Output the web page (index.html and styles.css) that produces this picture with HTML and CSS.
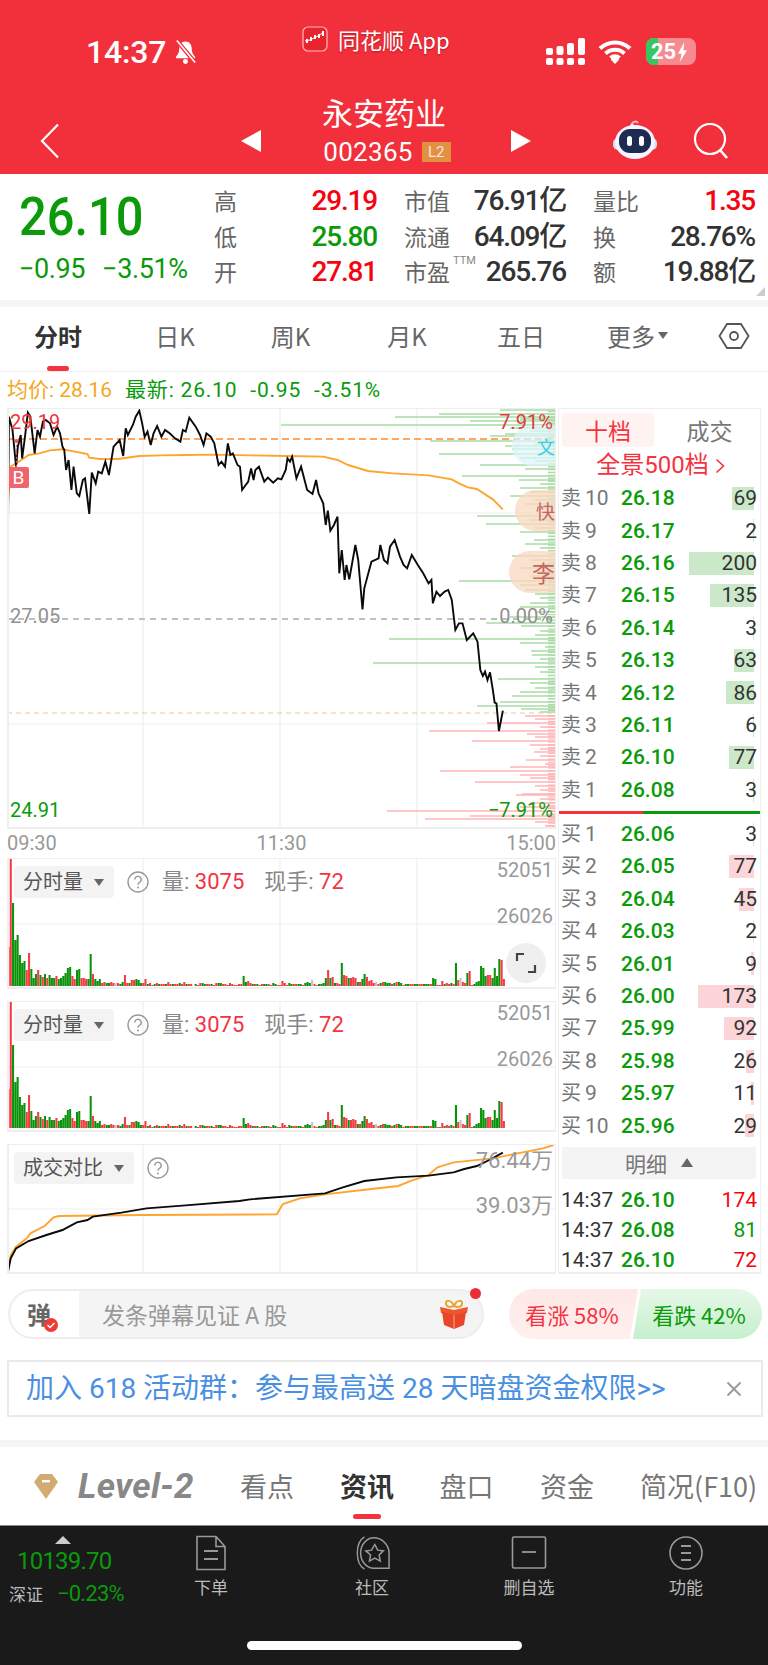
FILE: index.html
```html
<!DOCTYPE html>
<html lang="zh-CN">
<head>
<meta charset="utf-8">
<title>永安药业 002365</title>
<link rel="stylesheet" href="styles.css">
</head>
<body>
<div class="app">

  <header class="top">
    <div class="status">
      <div class="clock">14:37
        <svg class="bell" viewBox="0 0 24 26"><path d="M12 2c-4.500 0-6.500 3.500-6.500 7.500 0 4-1.500 6.500-3.500 8.500v1.500h20V18c-2-2-3.500-4.500-3.500-8.500C18.500 5.500 16.500 2 12 2z" fill="#fff"/><circle cx="12" cy="23" r="2.600" fill="#fff"/><path d="M3 1l19 23" stroke="#f2303c" stroke-width="4.500"/><path d="M3 1l19 23" stroke="#fff" stroke-width="1.800"/></svg>
      </div>
      <div class="brand">
        <svg class="brand-icon" viewBox="0 0 26 26"><rect x="1" y="1" width="24" height="24" rx="5" fill="#e8242e" stroke="#ffb9bd" stroke-width="1.200"/><path d="M3 15l5-1 4-2 4-2 6-4" stroke="#fff" stroke-width="1" fill="none"/><path d="M5 13v4M9 11v4M13 9v4M17 8v4M21 5v5" stroke="#fff" stroke-width="2"/></svg>
        <span>同花顺 App</span>
      </div>
      <div class="sys">
        <svg class="signal" viewBox="0 0 39 27"><g fill="#fff"><rect x="0" y="10" width="7" height="7" rx="2"/><rect x="0" y="20" width="7" height="7" rx="2"/><rect x="10.500" y="8" width="7" height="9" rx="2"/><rect x="10.500" y="20" width="7" height="7" rx="2"/><rect x="21" y="5" width="7" height="12" rx="2"/><rect x="21" y="20" width="7" height="7" rx="2"/><rect x="32" y="0" width="7" height="17" rx="2"/><rect x="32" y="20" width="7" height="7" rx="2"/></g></svg>
        <svg class="wifi" viewBox="0 0 34 26"><path d="M2 10.500a21.500 21.500 0 0 1 30 0M7.500 15.500a14 14 0 0 1 19 0M12.500 20a7 7 0 0 1 9 0" fill="none" stroke="#fff" stroke-width="4"/><path d="M17 26l-4.200-4.500a6 6 0 0 1 8.400 0z" fill="#fff"/></svg>
        <div class="battery"><span class="battery-fill"></span><span class="battery-num">25</span>
          <svg class="bolt" viewBox="0 0 12 22"><path d="M8 0L1 13h4l-2 9 8-13H7z" fill="#fff"/></svg>
        </div>
      </div>
    </div>
    <div class="nav">
      <svg class="back" viewBox="0 0 20 36"><path d="M18 1.500L2 18l16 16.500" fill="none" stroke="#fff" stroke-width="2.200"/></svg>
      <span class="tri tri-left"></span>
      <div class="stock">
        <div class="stock-name">永安药业</div>
        <div class="stock-code">002365<span class="l2">L2</span></div>
      </div>
      <span class="tri tri-right"></span>
      <span></span>
      <svg class="robot" viewBox="0 0 44 40"><path d="M19 6c-1-4 4-6 6-3" fill="none" stroke="#f7b6bd" stroke-width="2"/><circle cx="19" cy="6" r="2" fill="#fff"/><rect x="0" y="18" width="44" height="12" rx="5" fill="#d8dcf6"/><ellipse cx="22" cy="22" rx="20" ry="17" fill="#f4f5ff"/><rect x="6" y="9" width="32" height="24" rx="11" fill="#1d2a52"/><rect x="14" y="16" width="5" height="10" rx="2.500" fill="#fff"/><rect x="26" y="16" width="5" height="10" rx="2.500" fill="#fff"/></svg>
      <span></span>
      <svg class="search" viewBox="0 0 36 36"><circle cx="17" cy="16" r="15" fill="none" stroke="#fff" stroke-width="2.200"/><path d="M27 27l7 8" stroke="#fff" stroke-width="2.600"/></svg>
    </div>
  </header>

  <section class="quote">
    <div class="price">
      <div class="price-now">26.10</div>
      <div class="price-change"><span>−0.95</span><span>−3.51%</span></div>
    </div>
    <div class="stats">
      <div class="stat"><span class="k">高</span><span class="v up">29.19</span></div>
      <div class="stat"><span class="k">市值</span><span class="v">76.91亿</span></div>
      <div class="stat"><span class="k">量比</span><span class="v up">1.35</span></div>
      <div class="stat"><span class="k">低</span><span class="v down">25.80</span></div>
      <div class="stat"><span class="k">流通</span><span class="v">64.09亿</span></div>
      <div class="stat"><span class="k">换</span><span class="v">28.76%</span></div>
      <div class="stat"><span class="k">开</span><span class="v up">27.81</span></div>
      <div class="stat"><span class="k">市盈<sup class="ttm">TTM</sup></span><span class="v">265.76</span></div>
      <div class="stat"><span class="k">额</span><span class="v">19.88亿</span></div>
    </div>
    <span class="corner"></span>
  </section>
  <div class="band"></div>

  <nav class="periods">
    <a class="period active">分时</a>
    <a class="period">日K</a>
    <a class="period">周K</a>
    <a class="period">月K</a>
    <a class="period">五日</a>
    <a class="period">更多<i class="caret-small"></i></a>
    <a class="period"><svg class="hex" viewBox="0 0 32 28"><path d="M9 2h14l7.500 12L23 26H9L1.500 14z" fill="none" stroke="#555" stroke-width="1.800"/><circle cx="16" cy="14" r="4" fill="none" stroke="#555" stroke-width="1.800"/></svg></a>
  </nav>

  <div class="legend">
    <span class="avg">均价: 28.16</span>
    <span class="latest">最新: 26.10</span>
    <span class="latest">-0.95</span>
    <span class="latest">-3.51%</span>
  </div>

  <div class="board">
    <div class="charts">
      <div class="chart chart-price">
        <svg class="plot" viewBox="7 408 549 421">
          <g class="grid">
            <path d="M143 408V829M280 408V829M417 408V829M7 513H556M7 724H556"/>
          </g>
          <g class="profile-green">
            <path d="M491 408H556M500 410H556M439 414H556M395 417H556M520 419H556M470 421H556M281 425H556M510 428H556M530 431H556M505 434H556M490 436H556M535 444H556M430 441H556M505 446H556M512 449H556M439 454H556M520 458H556M535 461H556M480 465H556M525 469H556M462 476H556M519 480H556M540 484H556M520 488H556M530 492H556M510 496H556M535 500H556M525 504H556M540 508H556M477 516H556M530 520H556M486 524H556M535 528H556M520 532H556M534 540H556M525 544H556M540 548H556M512 556H556M530 560H556M545 564H556M520 568H556M535 572H556M530 576H556M459 581H556M520 585H556M525 590H556M535 594H556M540 598H556M530 603H556M520 607H556M535 612H556M510 617H556M486 623H556M521 626H556M540 631H556M535 635H556M389 639H556M520 643H556M545 647H556M531 651H556M532 655H556M540 659H556M373 663H556M535 667H556M540 672H556M498 679H556M530 683H556M535 688H556M512 696H556M520 692H556M477 706H556M500 702H556M521 709H556M540 712H556"/>
            <path class="strip" d="M552 408V713"/>
          </g>
          <g class="profile-red">
            <path d="M525 716H556M535 719H556M487 723H556M540 727H556M429 731H556M527 734H556M535 737H556M472 741H556M530 745H556M540 749H556M534 752H556M526 760H556M540 756H556M545 764H556M510 767H556M440 771H556M520 775H556M530 778H556M475 782H556M535 786H556M540 790H556M522 794H556M516 795H556M540 799H556M530 803H556M520 807H556M387 811H556M470 816H556M425 819H556M535 822H556M545 826H556"/>
            <path class="strip" d="M552 715V828"/>
          </g>
          <g class="guides">
            <path class="guide-high" d="M7 439H556"/>
            <path class="guide-prev" d="M7 619H556"/>
            <path class="guide-last" d="M7 713H556"/>
          </g>
          <g transform="translate(0 290) scale(.35714 .33333)">
            <path class="line-avg" d="M22 640L30 530L60 510L80 495L110 490L140 481L175 478L210 485L245 492L250 503L280 507L330 507L390 498L450 496L520 495L600 494L700 496L800 498L905 500L945 510L975 525L1030 543L1100 550L1200 556L1265 568L1285 580L1310 592L1335 597L1380 628L1408 658"/>
            <path class="line-price" d="M22 760L25 380L35 420L45 530L50 470L58 435L62 505L70 440L78 368L85 380L97 490L105 420L112 440L120 395L128 390L140 400L150 435L160 410L168 430L175 470L180 480L185 540L192 510L200 600L206 530L215 610L222 618L232 570L238 565L250 672L257 548L268 580L275 545L285 550L295 515L305 555L318 470L335 450L345 498L352 415L358 435L372 405L380 380L390 362L398 400L405 440L413 425L422 465L430 430L440 408L452 440L462 420L475 430L490 445L505 455L512 420L520 425L530 383L548 410L560 435L570 465L578 430L590 440L600 460L612 525L620 515L630 530L638 460L645 495L652 490L665 525L672 530L678 600L695 575L703 535L710 570L715 540L725 530L740 575L750 563L765 578L778 565L788 568L800 540L805 505L812 515L818 500L830 565L843 530L860 600L875 612L885 570L892 610L905 640L912 705L918 662L925 722L935 705L945 680L950 850L957 780L965 870L970 825L978 868L995 765L1003 810L1015 958L1020 895L1040 815L1060 805L1065 765L1075 810L1085 820L1092 770L1105 750L1120 800L1130 825L1140 835L1153 795L1170 825L1185 850L1200 880L1208 870L1212 940L1222 905L1232 918L1245 905L1255 900L1265 930L1275 1020L1285 1000L1295 1000L1307 1050L1325 1030L1337 1055L1345 1140L1352 1158L1358 1145L1365 1170L1372 1147L1380 1200L1385 1238L1390 1240L1397 1323L1408 1262"/>
            <path class="line-mark" d="M46 452V530"/>
            <circle class="mark-dot" cx="46" cy="453" r="6"/>
          </g>
        </svg>
        <span class="bubble bubble-wen">文</span>
        <span class="bubble bubble-kuai">快</span>
        <span class="bubble bubble-li">李</span>
        <span class="badge-b">B</span>
        <span class="tag tag-left tag-high">29.19</span>
        <span class="tag tag-left tag-prev">27.05</span>
        <span class="tag tag-left tag-low">24.91</span>
        <span class="tag tag-right tag-high">7.91%</span>
        <span class="tag tag-right tag-prev">0.00%</span>
        <span class="tag tag-right tag-low">−7.91%</span>
      </div>

      <div class="axis"><span>09:30</span><span>11:30</span><span>15:00</span></div>

      <div class="chart chart-vol">
        <svg class="plot" viewBox="7 858 549 131">
          <defs>
            <g id="vol-bars">
              <path class="bar-green" d="M2 0v-83M3 0v-46M4 0v-51M5 0v-31M6 0v-23M7 0v-25M10 0v-17M11 0v-8M12 0v-12M14 0v-11M16 0v-12M18 0v-11M19 0v-8M20 0v-8M22 0v-7M23 0v-8M24 0v-10M25 0v-13M26 0v-18M27 0v-19M30 0v-16M31 0v-17M35 0v-7M36 0v-32M38 0v-7M39 0v-5M40 0v-7M43 0v-3M44 0v-3M49 0v-2M50 0v-4M53 0v-3M56 0v-7M57 0v-6M58 0v-3M61 0v-2M64 0v-2M66 0v-2M69 0v-2M72 0v-2M75 0v-3M78 0v-2M82 0v-2M85 0v-3M86 0v-2M89 0v-2M92 0v-3M93 0v-3M96 0v-1M103 0v-10M104 0v-4M107 0v-2M109 0v-2M112 0v-2M113 0v-2M116 0v-3M117 0v-2M123 0v-3M124 0v-2M127 0v-2M128 0v-2M130 0v-3M131 0v-4M132 0v-3M136 0v-2M137 0v-2M138 0v-3M139 0v-8M141 0v-8M143 0v-3M146 0v-23M149 0v-8M153 0v-4M155 0v-7M156 0v-12M163 0v-3M165 0v-4M166 0v-3M167 0v-3M169 0v-3M171 0v-4M172 0v-3M174 0v-2M175 0v-2M178 0v-2M179 0v-2M182 0v-2M183 0v-2M184 0v-2M186 0v-8M187 0v-7M191 0v-2M194 0v-3M196 0v-23M201 0v-13M204 0v-2M205 0v-4M206 0v-5M207 0v-20M208 0v-18M209 0v-10M212 0v-8M213 0v-18M214 0v-10M215 0v-27"/>
              <path class="bar-red" d="M0 0v-39M1 0v-128M8 0v-16M9 0v-33M13 0v-16M15 0v-9M17 0v-8M21 0v-10M28 0v-10M29 0v-7M32 0v-8M33 0v-8M34 0v-7M37 0v-12M41 0v-3M42 0v-4M45 0v-4M46 0v-3M48 0v-3M51 0v-11M52 0v-3M54 0v-6M55 0v-6M59 0v-3M60 0v-7M62 0v-3M63 0v-1M65 0v-3M67 0v-2M68 0v-2M70 0v-4M71 0v-2M73 0v-2M74 0v-2M76 0v-2M77 0v-4M79 0v-2M80 0v-2M83 0v-1M84 0v-3M87 0v-2M88 0v-2M90 0v-1M91 0v-3M94 0v-2M95 0v-2M97 0v-3M98 0v-2M99 0v-1M100 0v-1M101 0v-2M102 0v-2M105 0v-5M106 0v-3M108 0v-2M110 0v-1M111 0v-2M114 0v-2M115 0v-1M118 0v-1M119 0v-1M120 0v-5M121 0v-3M122 0v-1M125 0v-2M126 0v-2M129 0v-1M134 0v-2M135 0v-1M140 0v-16M142 0v-9M144 0v-3M145 0v-2M147 0v-11M148 0v-10M150 0v-8M151 0v-9M152 0v-8M154 0v-4M157 0v-9M158 0v-5M159 0v-6M160 0v-3M162 0v-2M164 0v-4M168 0v-2M170 0v-4M173 0v-1M176 0v-2M177 0v-2M180 0v-2M181 0v-2M185 0v-2M188 0v-1M189 0v-1M190 0v-5M192 0v-3M193 0v-2M195 0v-2M197 0v-6M199 0v-4M200 0v-3M202 0v-15M203 0v-1M210 0v-11M211 0v-11M216 0v-26M217 0v-7"/>
              <path class="bar-grey" d="M47 0v-3M133 0v-6M161 0v-4M198 0v-8"/>
            </g>
          </defs>
          <path class="grid-line" d="M143 858V989M280 858V989M417 858V989M7 924H556"/>
          <use href="#vol-bars" transform="translate(8.500 986) scale(2.283 1)"/>
        </svg>
        <div class="panel-head">
          <span class="chip">分时量<i class="caret"></i></span>
          <svg class="help" viewBox="0 0 22 22"><circle cx="11" cy="11" r="10" fill="none" stroke="#999" stroke-width="1.400"/><path d="M7.800 8.500a3.200 3.200 0 1 1 4.700 2.800c-1 .6-1.500 1.200-1.500 2.500" fill="none" stroke="#999" stroke-width="1.400"/><circle cx="11" cy="16.500" r="1" fill="#999"/></svg>
          <span class="metric">量: <b>3075</b></span>
          <span class="metric">现手: <b>72</b></span>
        </div>
        <span class="tag tag-right vol-max">52051</span>
        <span class="tag tag-right vol-mid">26026</span>
        <span class="expand"><svg viewBox="0 0 22 22"><path d="M9 2H2v7M13 20h7v-7" fill="none" stroke="#444" stroke-width="2.200"/></svg></span>
      </div>

      <div class="chart chart-vol">
        <svg class="plot" viewBox="7 858 549 131">
          <path class="grid-line" d="M143 858V989M280 858V989M417 858V989M7 924H556"/>
          <use href="#vol-bars" transform="translate(8.500 985) scale(2.283 1)"/>
        </svg>
        <div class="panel-head">
          <span class="chip">分时量<i class="caret"></i></span>
          <svg class="help" viewBox="0 0 22 22"><circle cx="11" cy="11" r="10" fill="none" stroke="#999" stroke-width="1.400"/><path d="M7.800 8.500a3.200 3.200 0 1 1 4.700 2.800c-1 .6-1.500 1.200-1.500 2.500" fill="none" stroke="#999" stroke-width="1.400"/><circle cx="11" cy="16.500" r="1" fill="#999"/></svg>
          <span class="metric">量: <b>3075</b></span>
          <span class="metric">现手: <b>72</b></span>
        </div>
        <span class="tag tag-right vol-max">52051</span>
        <span class="tag tag-right vol-mid">26026</span>
      </div>

      <div class="chart chart-compare">
        <svg class="plot" viewBox="7 1144 549 130">
          <path class="grid-line" d="M143 1144V1274M280 1144V1274M417 1144V1274M7 1209H556"/>
          <g transform="translate(0 1130) scale(.35714 .33333)">
            <path class="line-avg" d="M22 425L30 375L45 350L75 325L85 310L125 288L150 262L165 258L400 255L775 253L792 222L840 205L910 193L1015 180L1115 168L1145 155L1200 135L1225 112L1270 97L1380 85L1520 55L1550 45"/>
            <path class="line-price" d="M22 428L30 385L45 355L80 333L130 315L175 300L215 277L245 270L260 260L340 248L410 235L520 226L670 213L700 208L910 190L960 172L1020 153L1110 142L1200 137L1270 127L1300 117L1335 108L1370 90L1408 68"/>
          </g>
        </svg>
        <div class="panel-head">
          <span class="chip">成交对比<i class="caret"></i></span>
          <svg class="help" viewBox="0 0 22 22"><circle cx="11" cy="11" r="10" fill="none" stroke="#999" stroke-width="1.400"/><path d="M7.800 8.500a3.200 3.200 0 1 1 4.700 2.800c-1 .6-1.500 1.200-1.500 2.500" fill="none" stroke="#999" stroke-width="1.400"/><circle cx="11" cy="16.500" r="1" fill="#999"/></svg>
        </div>
        <span class="tag tag-right cmp-max">76.44万</span>
        <span class="tag tag-right cmp-mid">39.03万</span>
      </div>
    </div>

    <aside class="book">
      <div class="book-tabs"><span class="book-tab on">十档</span><span class="book-tab">成交</span></div>
      <div class="depth-link">全景500档 <svg class="chev" viewBox="0 0 10 16"><path d="M1.500 1.500L8.500 8l-7 6.500" fill="none" stroke="#f5333f" stroke-width="1.600"/></svg></div>
      <div class="levels">
        <div class="level"><span class="depth sell" style="width:22px"></span><span class="lab">卖<em>10</em></span><span class="px">26.18</span><span class="qty">69</span></div>
        <div class="level"><span class="depth sell" style="width:1px"></span><span class="lab">卖<em>9</em></span><span class="px">26.17</span><span class="qty">2</span></div>
        <div class="level"><span class="depth sell" style="width:65px"></span><span class="lab">卖<em>8</em></span><span class="px">26.16</span><span class="qty">200</span></div>
        <div class="level"><span class="depth sell" style="width:44px"></span><span class="lab">卖<em>7</em></span><span class="px">26.15</span><span class="qty">135</span></div>
        <div class="level"><span class="depth sell" style="width:1px"></span><span class="lab">卖<em>6</em></span><span class="px">26.14</span><span class="qty">3</span></div>
        <div class="level"><span class="depth sell" style="width:20px"></span><span class="lab">卖<em>5</em></span><span class="px">26.13</span><span class="qty">63</span></div>
        <div class="level"><span class="depth sell" style="width:28px"></span><span class="lab">卖<em>4</em></span><span class="px">26.12</span><span class="qty">86</span></div>
        <div class="level"><span class="depth sell" style="width:1px"></span><span class="lab">卖<em>3</em></span><span class="px">26.11</span><span class="qty">6</span></div>
        <div class="level"><span class="depth sell" style="width:25px"></span><span class="lab">卖<em>2</em></span><span class="px">26.10</span><span class="qty">77</span></div>
        <div class="level"><span class="depth sell" style="width:1px"></span><span class="lab">卖<em>1</em></span><span class="px">26.08</span><span class="qty">3</span></div>
      </div>
      <div class="ratio"><span class="ratio-buy"></span><span class="ratio-sell"></span></div>
      <div class="levels">
        <div class="level"><span class="depth buy" style="width:1px"></span><span class="lab">买<em>1</em></span><span class="px">26.06</span><span class="qty">3</span></div>
        <div class="level"><span class="depth buy" style="width:25px"></span><span class="lab">买<em>2</em></span><span class="px">26.05</span><span class="qty">77</span></div>
        <div class="level"><span class="depth buy" style="width:15px"></span><span class="lab">买<em>3</em></span><span class="px">26.04</span><span class="qty">45</span></div>
        <div class="level"><span class="depth buy" style="width:1px"></span><span class="lab">买<em>4</em></span><span class="px">26.03</span><span class="qty">2</span></div>
        <div class="level"><span class="depth buy" style="width:3px"></span><span class="lab">买<em>5</em></span><span class="px">26.01</span><span class="qty">9</span></div>
        <div class="level"><span class="depth buy" style="width:56px"></span><span class="lab">买<em>6</em></span><span class="px">26.00</span><span class="qty">173</span></div>
        <div class="level"><span class="depth buy" style="width:30px"></span><span class="lab">买<em>7</em></span><span class="px">25.99</span><span class="qty">92</span></div>
        <div class="level"><span class="depth buy" style="width:8px"></span><span class="lab">买<em>8</em></span><span class="px">25.98</span><span class="qty">26</span></div>
        <div class="level"><span class="depth buy" style="width:3px"></span><span class="lab">买<em>9</em></span><span class="px">25.97</span><span class="qty">11</span></div>
        <div class="level"><span class="depth buy" style="width:9px"></span><span class="lab">买<em>10</em></span><span class="px">25.96</span><span class="qty">29</span></div>
      </div>
      <div class="ticks-head">明细<i class="caret-up"></i></div>
      <div class="ticks">
        <div class="tick"><span class="tick-time">14:37</span><span class="px">26.10</span><span class="qty up">174</span></div>
        <div class="tick"><span class="tick-time">14:37</span><span class="px">26.08</span><span class="qty down">81</span></div>
        <div class="tick"><span class="tick-time">14:37</span><span class="px">26.10</span><span class="qty up">72</span></div>
      </div>
    </aside>
  </div>

  <div class="actions">
    <div class="danmu">
      <div class="danmu-mark">弹<svg class="danmu-check" viewBox="0 0 14 14"><circle cx="7" cy="7" r="7" fill="#ee3b35"/><path d="M3.500 7l2.500 2.500 4.500-4.500" fill="none" stroke="#fff" stroke-width="1.500"/></svg></div>
      <div class="danmu-input">发条弹幕见证 A 股
        <svg class="gift" viewBox="0 0 30 30"><path d="M15 7c-3-7-9-6-8-2s5 3 8 2zM15 7c3-7 9-6 8-2s-5 3-8 2z" fill="none" stroke="#e9a52e" stroke-width="2"/><path d="M1 8l14 3 14-3-1 6-13 3-13-3z" fill="#f2552c"/><path d="M3 13l12 3 12-3-2 13-10 4-10-4z" fill="#e8452a"/><path d="M15 16v14" stroke="#f58a5c" stroke-width="1.500"/></svg>
      </div>
      <span class="danmu-dot"></span>
    </div>
    <div class="vote">
      <span class="vote-up">看涨 58%</span>
      <span class="vote-down">看跌 42%</span>
    </div>
  </div>

  <div class="promo">
    <span>加入 618 活动群：参与最高送 28 天暗盘资金权限&gt;&gt;</span>
    <svg class="promo-close" viewBox="0 0 16 16"><path d="M1.500 1.500l13 13M14.500 1.500l-13 13" stroke="#999" stroke-width="1.800"/></svg>
  </div>
  <div class="band band-lower"></div>

  <nav class="sections">
    <div class="level2">
      <svg class="gem" viewBox="0 0 24 26"><path d="M6 1h12l6 8-12 17L0 9z" fill="#d3ab72"/><rect x="8" y="7" width="8" height="2.400" fill="#fff"/></svg>
      <span class="level2-text">Level-2</span>
    </div>
    <a class="section">看点</a>
    <a class="section active">资讯</a>
    <a class="section">盘口</a>
    <a class="section">资金</a>
    <a class="section section-last">简况(F10)</a>
  </nav>

  <footer class="dock">
    <div class="dock-row">
      <div class="index">
        <i class="index-tri"></i>
        <div class="index-value">10139.70</div>
        <div class="index-line"><span class="index-name">深证</span><span class="index-pct">−0.23%</span></div>
      </div>
      <div class="dock-item">
        <svg class="dock-icon" viewBox="0 0 36 36"><path d="M4 1.500h19l9 10v23H4z M23 1.500v10h9" fill="none" stroke="#999" stroke-width="1.600"/><path d="M11 16h14M11 24h14" stroke="#999" stroke-width="1.800"/></svg>
        <span>下单</span>
      </div>
      <div class="dock-item">
        <svg class="dock-icon" viewBox="0 0 38 36"><path d="M11 1c-10 6-10 28 0 34" fill="none" stroke="#999" stroke-width="1.500"/><path d="M7 17a14 16 0 0 1 14-15h0c8 0 16 7 16 16v16H20A14 16 0 0 1 7 17z" fill="none" stroke="#999" stroke-width="1.600"/><path d="M22 9l3 6 6 .800-4.500 4.300 1.200 6.400-5.700-3.200-5.700 3.200 1.200-6.400L12.500 15.800l6-.800z" fill="none" stroke="#999" stroke-width="1.600"/></svg>
        <span>社区</span>
      </div>
      <div class="dock-item">
        <svg class="dock-icon" viewBox="0 0 36 36"><rect x="1.500" y="2" width="33" height="31" rx="1.500" fill="none" stroke="#999" stroke-width="1.600"/><path d="M11 17h14" stroke="#999" stroke-width="1.800"/></svg>
        <span>删自选</span>
      </div>
      <div class="dock-item">
        <svg class="dock-icon" viewBox="0 0 36 36"><circle cx="18" cy="18" r="16" fill="none" stroke="#999" stroke-width="1.600"/><path d="M13 11h10M13 18h10M13 25h10" stroke="#999" stroke-width="1.900"/></svg>
        <span>功能</span>
      </div>
    </div>
    <div class="home-bar"></div>
  </footer>
</div>
</body>
</html>
```
FILE: styles.css
```css
* { box-sizing: border-box; }
html, body { margin: 0; padding: 0; background: #fff; }
body { font-family: Roboto, "Noto Sans CJK SC", sans-serif; color: #333; }
.app { width: 768px; height: 1665px; overflow: hidden; }
a { display: block; }
em, i { font-style: normal; }

/* header */
.top { background: #f2303c; height: 174px; color: #fff; }
.status { height: 82px; display: grid; grid-template-columns: 302px 1fr auto; padding-right: 72px; }
.clock { padding: 34px 0 0 86px; font: 500 32px/36px Roboto, sans-serif; display: flex; align-items: center; height: 70px; letter-spacing: -.2px; }
.bell { width: 23px; height: 26px; margin-left: 8px; }
.brand { display: flex; align-items: center; height: 26px; margin-top: 26px; font: 400 22px/24px "Noto Sans CJK SC", sans-serif; text-shadow: 0 1px 2px rgba(120,0,0,.5); }
.brand-icon { width: 26px; height: 26px; margin-right: 10px; }
.brand span { white-space: nowrap; }
.sys { display: flex; align-items: flex-start; padding-top: 38px; }
.signal { width: 39px; height: 27px; }
.wifi { width: 34px; height: 26px; margin-left: 13px; }
.battery { position: relative; width: 50px; height: 27px; margin-left: 14px; border-radius: 8px; background: #f58a90; overflow: hidden; display: flex; align-items: center; font: 700 22px/27px Roboto, sans-serif; }
.battery-fill { position: absolute; left: 0; top: 0; bottom: 0; width: 12px; background: #38c660; }
.battery-num { position: relative; margin-left: 5px; }
.bolt { position: relative; width: 11px; height: 20px; margin-left: 1px; }

.nav { height: 92px; display: grid; grid-template-columns: 241px 20px 1fr 20px 82px 43px 37px 35px 40px; align-items: center; }
.back { width: 20px; height: 36px; margin: 26px 0 0 40px; }
.tri { width: 0; height: 0; border-top: 11px solid transparent; border-bottom: 11px solid transparent; margin-top: 26px; }
.tri-left { border-right: 20px solid #fff; }
.tri-right { border-left: 20px solid #fff; }
.stock { display: flex; flex-direction: column; align-items: center; padding: 4px 4px 0 0; }
.stock-name { font: 400 31px/40px "Noto Sans CJK SC", sans-serif; }
.stock-code { font: 400 26px/34px Roboto, sans-serif; display: flex; align-items: center; letter-spacing: .3px; padding-left: 6px; margin-top: 3px; }
.l2 { background: #e2923f; font-size: 15px; line-height: 20px; width: 29px; text-align: center; margin-left: 9px; color: #fde; letter-spacing: 0; }
.robot { width: 44px; height: 40px; margin-top: 24px; }
.search { width: 36px; height: 36px; margin-top: 26px; }

/* quote summary */
.quote { position: relative; height: 126px; display: flex; background: #fff; }
.price { width: 214px; padding: 18px 0 0 19px; }
.price-now { font: 500 53px/50px Roboto, sans-serif; color: #0a9a0a; transform: scaleX(.92); transform-origin: left; }
.price-change { display: flex; gap: 17px; margin-top: 10px; font: 400 27px/34px Roboto, sans-serif; color: #0a9a0a; letter-spacing: -.4px; white-space: nowrap; }
.stats { display: grid; grid-template-columns: 163px 162px 162px; column-gap: 27px; grid-auto-rows: 35.5px; padding-top: 9px; }
.stat { display: flex; justify-content: space-between; align-items: center; white-space: nowrap; }
.k { font: 400 23px/35px "Noto Sans CJK SC", sans-serif; color: #666; position: relative; }
.ttm { font: 400 11px/1 Roboto, sans-serif; position: absolute; left: 49px; top: 1px; color: #888; }
.v { font: 500 28px/35px Roboto, "Noto Sans CJK SC", sans-serif; color: #333; letter-spacing: -1.2px; }
.up { color: #f5040f; }
.down { color: #0a9a0a; }
.corner { position: absolute; right: 3px; bottom: 4px; width: 0; height: 0; border-left: 9px solid transparent; border-bottom: 9px solid #ccc; }
.band { height: 7px; background: #f5f5f5; }

/* period tabs */
.periods { height: 65px; display: grid; grid-template-columns: 116px 118px 113px 120px 108px 125px 68px; border-bottom: 1px solid #eee; }
.period { position: relative; display: flex; align-items: center; justify-content: center; padding-bottom: 7px; font: 400 24px/32px "Noto Sans CJK SC", Roboto, sans-serif; color: #666; }
.period.active { color: #333; font-weight: 700; }
.period.active::after { content: ""; position: absolute; left: 47px; bottom: 0; width: 22px; height: 5px; background: #f5333f; border-radius: 3px; }
.caret-small { width: 0; height: 0; border-left: 5px solid transparent; border-right: 5px solid transparent; border-top: 7px solid #666; margin-left: 3px; }
.hex { width: 32px; height: 28px; }

.legend { height: 36px; display: flex; gap: 13px; align-items: center; padding: 0 0 0 7px; font: 400 21px/36px Roboto, "Noto Sans CJK SC", sans-serif; }
.avg { color: #f5a623; }
.latest { color: #0a9a0a; letter-spacing: .8px; }

/* chart column + order book */
.board { display: grid; grid-template-columns: 549px 205px; column-gap: 2px; padding-left: 7px; height: 866px; }
.charts { display: flex; flex-direction: column; }
.chart { position: relative; border: 2px solid #eee; border-width: 1px 1px 2px 2px; overflow: hidden; }
.chart-price { height: 421px; }
.chart-vol { height: 131px; margin-bottom: 12px; }
.chart-compare { height: 130px; }
.plot { position: absolute; left: -2px; top: -1px; width: 549px; height: calc(100% + 3px); }
.grid, .grid-line { stroke: #efefef; fill: none; stroke-width: 1.200; }
.profile-green { stroke: #a9dca5; stroke-width: 1.400; fill: none; }
.profile-red { stroke: #ffb5b5; stroke-width: 1.400; fill: none; }
.strip { stroke-width: 8; stroke-dasharray: 1.400 1.500; }
.guides path { fill: none; }
.guide-high { stroke: #ff8b2c; stroke-width: 1.600; stroke-dasharray: 7 4; }
.guide-prev { stroke: #aaa; stroke-width: 1.400; stroke-dasharray: 6 5; }
.guide-last { stroke: #eac79b; stroke-width: 1.200; stroke-dasharray: 5 4; }
.line-avg { fill: none; stroke: #ffa42e; stroke-width: 1.900; vector-effect: non-scaling-stroke; }
.line-price { fill: none; stroke: #0a0a0a; stroke-width: 1.900; vector-effect: non-scaling-stroke; }
.line-mark { fill: none; stroke: #f4545f; stroke-width: 1.200; stroke-dasharray: 2 2; vector-effect: non-scaling-stroke; }
.mark-dot { fill: #f4545f; }
.bar-green { stroke: #0a930a; stroke-width: .9; fill: none; }
.bar-red { stroke: #f53a44; stroke-width: .9; fill: none; }
.bar-grey { stroke: #c4c4c4; stroke-width: .9; fill: none; }

.bubble { position: absolute; font: 400 18px/1 "Noto Sans CJK SC", sans-serif; display: flex; align-items: center; }
.bubble-wen { left: 503px; top: 16px; width: 60px; height: 41px; border-radius: 21px; background: rgba(222,246,250,.75); color: #35cfe2; padding-left: 25px; }
.bubble-kuai { left: 506px; top: 81px; width: 60px; height: 41px; border-radius: 21px; background: rgba(250,216,194,.78); color: #c4655f; padding-left: 21px; font-size: 19px; }
.bubble-li { left: 500px; top: 142px; width: 66px; height: 42px; border-radius: 21px; background: rgba(250,216,194,.78); color: #c4655f; padding-left: 23px; font-size: 23px; }
.badge-b { position: absolute; left: -1px; top: 58px; width: 21px; height: 21px; background: #f0646e; border-radius: 2px; color: #fff; font: 400 19px/21px Roboto, sans-serif; text-align: center; }

.tag { position: absolute; font: 400 20px/24px Roboto, "Noto Sans CJK SC", sans-serif; }
.tag-left { left: 1px; }
.tag-right { right: 2px; }
.tag-high { top: 1px; color: #f0333e; }
.tag-high.tag-right { color: #e03c40; }
.tag-prev { top: 195px; color: #909090; }
.tag-low { top: 389px; color: #0a9a0a; }
.vol-max { top: -1px; color: #999; font-size: 20px; }
.vol-mid { top: 45px; color: #999; font-size: 20px; }
.cmp-max { top: 4px; color: #999; font-size: 22px; }
.cmp-mid { top: 49px; color: #999; font-size: 22px; }

.axis { height: 29px; display: flex; justify-content: space-between; align-items: center; font: 400 20px/29px Roboto, sans-serif; color: #999; }

.panel-head { position: relative; display: flex; align-items: center; margin: 7px 0 0 5px; height: 32px; font: 400 22px/32px Roboto, "Noto Sans CJK SC", sans-serif; color: #888; }
.chip { display: flex; align-items: center; height: 32px; padding: 0 10px 0 9px; background: #f3f3f3; border-radius: 4px; color: #555; font-size: 20px; }
.caret { width: 0; height: 0; border-left: 5.500px solid transparent; border-right: 5.500px solid transparent; border-top: 7px solid #666; margin-left: 11px; }
.help { width: 22px; height: 22px; margin: 0 13px; }
.metric { margin-right: 20px; white-space: nowrap; }
.metric b { font-weight: 400; color: #f5333f; }
.expand { position: absolute; left: 497px; top: 84px; width: 40px; height: 40px; border-radius: 50%; background: #efefef; display: flex; align-items: center; justify-content: center; }
.expand svg { width: 22px; height: 22px; }

/* order book */
.book { border: 1px solid #eee; border-width: 1px 1px 2px 1px; padding: 0 1px; height: 866px; width: 203px; }
.book-tabs { display: grid; grid-template-columns: 92px 1fr; margin: 4px 0 2px 2px; height: 34px; }
.book-tab { display: flex; align-items: center; justify-content: center; font: 400 23px/34px "Noto Sans CJK SC", sans-serif; color: #777; border-radius: 4px; padding-left: 6px; }
.book-tab.on { background: #fff3f1; color: #f5333f; padding-left: 0; }
.depth-link { height: 33px; display: flex; align-items: center; justify-content: center; gap: 6px; color: #f5333f; font: 400 24px/33px Roboto, "Noto Sans CJK SC", sans-serif; padding-left: 2px; }
.chev { width: 10px; height: 16px; }
.levels { display: grid; grid-auto-rows: 32.400px; }
.level, .tick { position: relative; display: grid; grid-template-columns: 60px 60px 1fr; align-items: center; padding: 0 2px 0 1px; font: 400 21px/30px Roboto, "Noto Sans CJK SC", sans-serif; }
.depth { position: absolute; right: 5px; top: 5px; height: 23px; }
.depth.sell { background: #cbe9c9; }
.depth.buy { background: #fbd5d7; }
.lab { position: relative; color: #777; font-size: 20px; white-space: nowrap; }
.lab em { margin-left: 4px; font-size: 21px; }
.px { position: relative; color: #0a9a0a; font-weight: 500; }
.qty { position: relative; text-align: right; color: #333; }
.qty.up { color: #f5040f; }
.qty.down { color: #0a9a0a; }
.ratio { display: flex; height: 3px; margin: 5px -1px 4px; }
.ratio-buy { width: 84px; background: #f5333f; }
.ratio-sell { flex: 1; background: #0a9a0a; }
.ticks-head { height: 32px; margin: 5px 3px 6px 2px; background: #f4f4f4; display: flex; align-items: center; justify-content: center; font: 400 21px/32px "Noto Sans CJK SC", sans-serif; color: #777; }
.caret-up { width: 0; height: 0; border-left: 6px solid transparent; border-right: 6px solid transparent; border-bottom: 9px solid #666; margin-left: 14px; }
.ticks { display: grid; grid-auto-rows: 30px; }
.tick-time { color: #333; }

/* actions row */
.actions { display: flex; justify-content: space-between; padding: 15px 6px 0 8px; height: 65px; }
.danmu { position: relative; display: flex; width: 476px; height: 50px; }
.danmu-mark { position: relative; width: 71px; border: 2px solid #eee; border-right: 0; border-radius: 25px 0 0 25px; font: 700 24px/46px "Noto Sans CJK SC", sans-serif; color: #666; padding-left: 17px; background: #fff; }
.danmu-check { position: absolute; left: 34px; top: 27px; width: 14px; height: 14px; }
.danmu-input { flex: 1; display: flex; align-items: center; justify-content: space-between; padding: 0 13px 0 23px; background: #f4f4f4; border: 2px solid #eee; border-left: 0; border-radius: 0 25px 25px 0; font: 400 23px/1 "Noto Sans CJK SC", sans-serif; color: #999; }
.gift { width: 30px; height: 30px; }
.danmu-dot { position: absolute; right: 3px; top: -1px; width: 11px; height: 11px; border-radius: 50%; background: #e9303a; }
.vote { display: flex; width: 253px; height: 50px; font: 400 22px/50px "Noto Sans CJK SC", Roboto, sans-serif; text-align: center; }
.vote-up { width: 129px; padding-right: 3px; background: linear-gradient(#ffe8e6, #fff0ee); color: #f5333f; border-radius: 25px 0 0 25px; clip-path: polygon(0 0, 100% 0, calc(100% - 8px) 100%, 0 100%); }
.vote-down { width: 129px; margin-left: -5px; padding-left: 3px; background: linear-gradient(#e6f8e8, #c5efcd); color: #0a9a0a; border-radius: 0 25px 25px 0; clip-path: polygon(8px 0, 100% 0, 100% 100%, 0 100%); }

.promo { display: flex; align-items: center; justify-content: space-between; height: 57px; margin: 21px 5px 0 7px; padding: 0 19px 0 17px; border: 2px solid #eaeaea; font: 400 28px/1 Roboto, "Noto Sans CJK SC", sans-serif; color: #4a90e2; white-space: nowrap; }
.promo-close { width: 16px; height: 16px; }
.band-lower { margin-top: 23px; }

/* section tabs */
.sections { height: 78px; display: grid; grid-template-columns: 217px 100px 100px 99px 102px 1fr; align-items: center; }
.level2 { display: flex; align-items: center; padding-left: 34px; }
.gem { width: 24px; height: 26px; margin-right: 20px; }
.level2-text { font: italic 700 35px/1 Roboto, sans-serif; color: #888; letter-spacing: .3px; }
.section { position: relative; height: 78px; display: flex; align-items: center; justify-content: center; padding-bottom: 2px; font: 400 27px/1 "Noto Sans CJK SC", Roboto, sans-serif; color: #777; white-space: nowrap; }
.section.active { color: #333; font-weight: 700; }
.section.active::after { content: ""; position: absolute; left: 36px; bottom: 6px; width: 28px; height: 5px; border-radius: 3px; background: #f5333f; }
.section-last { justify-content: flex-start; padding-left: 22px; }

/* dock */
.dock { height: 140px; background: #1a1a1a; border-top: 1px solid #888; display: flex; flex-direction: column; }
.dock-row { height: 114px; display: grid; grid-template-columns: 132px 158px 164px 150px 164px; }
.index { position: relative; padding: 20px 0 0 9px; }
.index-tri { position: absolute; left: 55px; top: 10px; width: 0; height: 0; border-left: 8px solid transparent; border-right: 8px solid transparent; border-bottom: 8px solid #ccc; }
.index-value { padding-left: 8px; font: 400 24px/30px Roboto, sans-serif; color: #0a9a0a; letter-spacing: -.8px; }
.index-line { display: flex; align-items: center; gap: 14px; margin-top: 6px; white-space: nowrap; }
.index-name { font: 400 17px/24px "Noto Sans CJK SC", sans-serif; color: #bbb; }
.index-pct { font: 400 22px/24px Roboto, sans-serif; color: #0a9a0a; letter-spacing: -.8px; }
.dock-item { display: flex; flex-direction: column; align-items: center; padding-top: 9px; font: 400 17px/26px "Noto Sans CJK SC", sans-serif; color: #bbb; }
.dock-icon { width: 36px; height: 36px; margin-bottom: 3px; }
.home-bar { width: 275px; height: 9px; margin: 1px auto 0 247px; background: #fff; border-radius: 5px; }
```
